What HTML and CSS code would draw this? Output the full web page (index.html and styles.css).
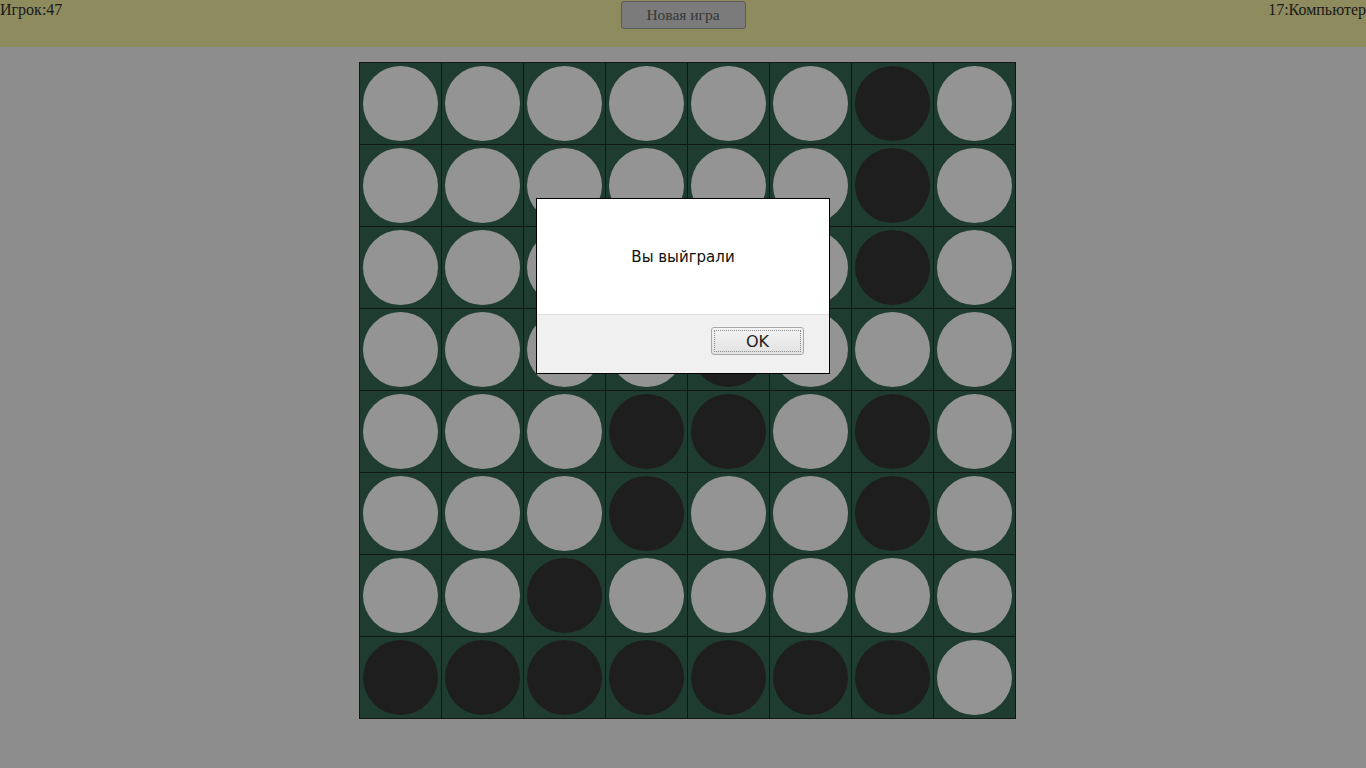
FILE: index.html
```html
<!DOCTYPE html>
<html lang="ru">
<head>
<meta charset="utf-8">
<title>Реверси</title>
<link rel="stylesheet" href="styles.css">
</head>
<body>
<header class="topbar">
  <div class="score">Игрок:47</div>
  <button class="new-game">Новая игра</button>
  <div class="score right">17:Компьютер</div>
</header>
<main class="stage">
  <div class="board">
    <div class="cell"><span class="w"></span></div><div class="cell"><span class="w"></span></div><div class="cell"><span class="w"></span></div><div class="cell"><span class="w"></span></div><div class="cell"><span class="w"></span></div><div class="cell"><span class="w"></span></div><div class="cell"><span class="b"></span></div><div class="cell"><span class="w"></span></div>
    <div class="cell"><span class="w"></span></div><div class="cell"><span class="w"></span></div><div class="cell"><span class="w"></span></div><div class="cell"><span class="w"></span></div><div class="cell"><span class="w"></span></div><div class="cell"><span class="w"></span></div><div class="cell"><span class="b"></span></div><div class="cell"><span class="w"></span></div>
    <div class="cell"><span class="w"></span></div><div class="cell"><span class="w"></span></div><div class="cell"><span class="w"></span></div><div class="cell"><span class="w"></span></div><div class="cell"><span class="w"></span></div><div class="cell"><span class="w"></span></div><div class="cell"><span class="b"></span></div><div class="cell"><span class="w"></span></div>
    <div class="cell"><span class="w"></span></div><div class="cell"><span class="w"></span></div><div class="cell"><span class="w"></span></div><div class="cell"><span class="w"></span></div><div class="cell"><span class="b"></span></div><div class="cell"><span class="w"></span></div><div class="cell"><span class="w"></span></div><div class="cell"><span class="w"></span></div>
    <div class="cell"><span class="w"></span></div><div class="cell"><span class="w"></span></div><div class="cell"><span class="w"></span></div><div class="cell"><span class="b"></span></div><div class="cell"><span class="b"></span></div><div class="cell"><span class="w"></span></div><div class="cell"><span class="b"></span></div><div class="cell"><span class="w"></span></div>
    <div class="cell"><span class="w"></span></div><div class="cell"><span class="w"></span></div><div class="cell"><span class="w"></span></div><div class="cell"><span class="b"></span></div><div class="cell"><span class="w"></span></div><div class="cell"><span class="w"></span></div><div class="cell"><span class="b"></span></div><div class="cell"><span class="w"></span></div>
    <div class="cell"><span class="w"></span></div><div class="cell"><span class="w"></span></div><div class="cell"><span class="b"></span></div><div class="cell"><span class="w"></span></div><div class="cell"><span class="w"></span></div><div class="cell"><span class="w"></span></div><div class="cell"><span class="w"></span></div><div class="cell"><span class="w"></span></div>
    <div class="cell"><span class="b"></span></div><div class="cell"><span class="b"></span></div><div class="cell"><span class="b"></span></div><div class="cell"><span class="b"></span></div><div class="cell"><span class="b"></span></div><div class="cell"><span class="b"></span></div><div class="cell"><span class="b"></span></div><div class="cell"><span class="w"></span></div>
  </div>
</main>
<div class="backdrop"></div>
<div class="dialog" role="dialog">
  <div class="dialog-body">Вы выйграли</div>
  <div class="dialog-footer">
    <button class="ok"><span class="ok-label">OK</span></button>
  </div>
</div>
</body>
</html>
```
FILE: styles.css
```css
html, body {
  margin: 0;
  padding: 0;
  height: 100%;
}
body {
  background: #f3f3f3;
  font-family: "Liberation Serif", serif;
  font-size: 16px;
  color: #303030;
  overflow: hidden;
}
.topbar {
  height: 47px;
  background: #f5f0a2;
  display: flex;
  justify-content: space-between;
  align-items: flex-start;
}
.score {
  line-height: 20px;
  width: 200px;
}
.score.right {
  text-align: right;
}
.new-game {
  margin-top: 1px;
  width: 125px;
  height: 28px;
  background: #d4d4d4;
  border: 1px solid #9b9b9b;
  border-radius: 3px;
  font-family: "Liberation Serif", serif;
  font-size: 15.5px;
  color: #5e5e5e;
  padding: 0;
}
.stage {
  display: flex;
  justify-content: center;
  padding: 15px 0 0 9px;
}
.board {
  display: grid;
  grid-template-columns: repeat(8, 81px);
  grid-auto-rows: 81px;
  gap: 1px;
  padding: 1px;
  background: #222822;
}
.cell {
  background: #356953;
  display: flex;
  align-items: center;
  justify-content: center;
}
.cell span {
  width: 75px;
  height: 75px;
  border-radius: 50%;
}
.cell .w { background: #ffffff; }
.cell .b { background: #343434; }
.backdrop {
  position: fixed;
  inset: 0;
  background: rgba(0, 0, 0, 0.42);
}
.dialog {
  position: fixed;
  left: 536px;
  top: 198px;
  width: 292px;
  height: 174px;
  border: 1px solid #000;
  background: #fff;
  display: flex;
  flex-direction: column;
  font-family: "DejaVu Sans", sans-serif;
}
.dialog-body {
  height: 115px;
  display: flex;
  align-items: center;
  justify-content: center;
  font-size: 15px;
  color: #111;
  border-bottom: 1px solid #dedede;
}
.dialog-footer {
  flex: 1;
  background: #f0f0f0;
  display: flex;
  justify-content: flex-end;
  align-items: flex-start;
  padding: 12px 25px 0 0;
}
.ok {
  width: 93px;
  height: 28px;
  padding: 2px;
  border: 1px solid #a8a8a8;
  border-radius: 3px;
  background: linear-gradient(#f4f4f4, #e2e2e2);
  font-family: "DejaVu Sans", sans-serif;
  font-size: 16px;
  color: #222;
  display: flex;
}
.ok-label {
  flex: 1;
  border: 1px dotted #8a8a8a;
  display: flex;
  align-items: center;
  justify-content: center;
}
```
